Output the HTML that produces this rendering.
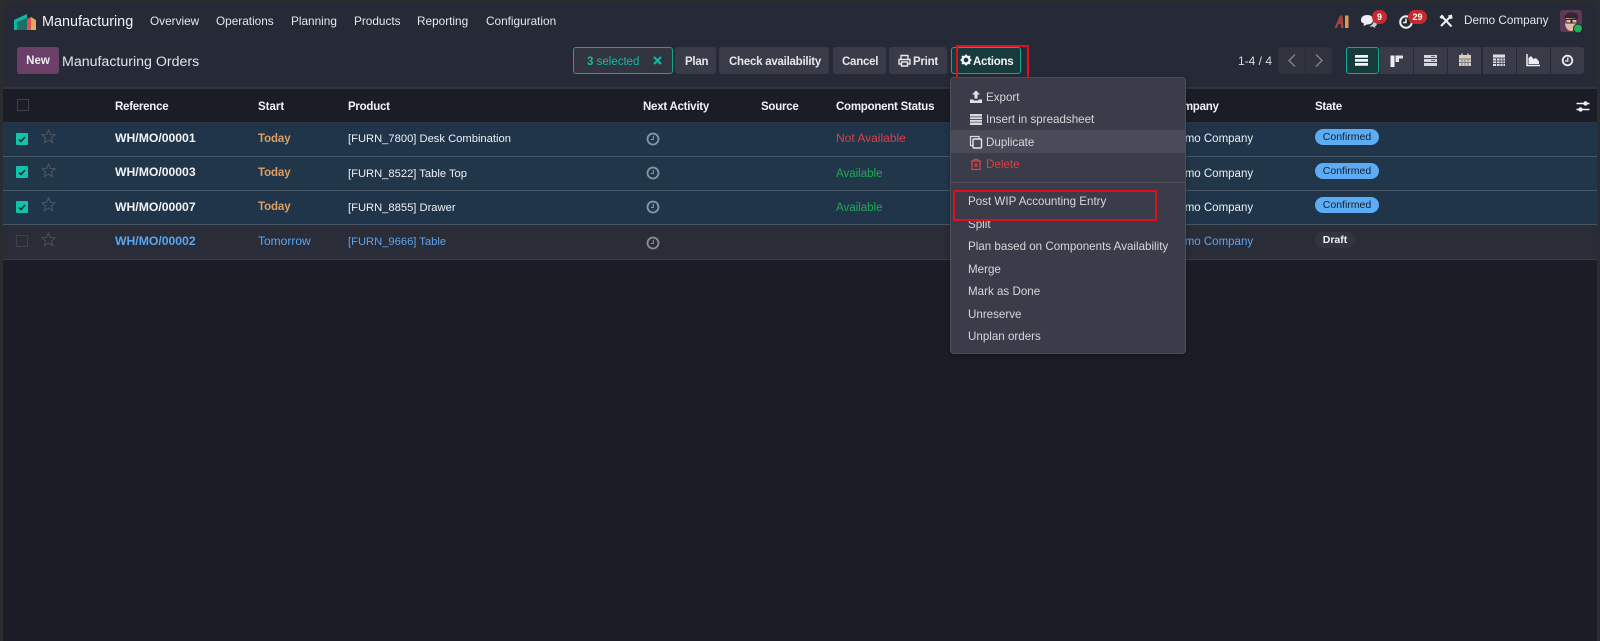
<!DOCTYPE html>
<html lang="en"><head><meta charset="utf-8"><title>Manufacturing Orders</title>
<style>
html,body{margin:0;padding:0;width:1600px;height:641px;overflow:hidden;background:#2b2c30}
body{position:relative;font-family:"Liberation Sans",sans-serif;font-size:12px;color:#e6e6ea}
.b,.t,svg.i{position:absolute}
.t{white-space:nowrap;line-height:16px;height:16px}
.w{font-weight:bold;color:#f2f2f5}
.h{font-size:11.5px;letter-spacing:-.25px}
.btn{position:absolute;background:#3a3b48;border-radius:3px;top:47px;height:27px}
.bt{font-weight:bold;color:#e6e6ea;font-size:11.5px;letter-spacing:-.25px}
.n{font-size:11.8px;top:13px}
.m{color:#d6d6da;font-size:11.6px}
.c{font-size:11.5px;color:#eef0f3}
.p{font-size:11.2px;color:#eef0f3}
.blue{color:#5aa5ef}
.today{color:#dc9e63;font-weight:bold;font-size:11.5px;letter-spacing:-.1px}
.row{position:absolute;left:3px;width:1594px}
.cb{position:absolute;left:16px;width:12px;height:12px;background:#0ec5ac;border-radius:1px}
.pill{position:absolute;left:1315px;height:16px;border-radius:8px;background:#5cabf5;color:#16202c;font-size:10.5px;line-height:16px;text-align:center;width:64px}
.vb{position:absolute;top:47px;height:27px;width:33px;background:#3a3b48}
</style></head><body>
<div class="b" style="left:3px;top:3px;width:1594px;height:638px;background:#1b1d26"></div>
<div class="b" style="left:3px;top:3px;width:1594px;height:84px;background:#262a36"></div>
<div class="b" style="left:3px;top:87px;width:1594px;height:2px;background:#31333d"></div>

<!-- logo -->
<svg class="i" style="left:13px;top:13px" width="24" height="18" viewBox="0 0 24 18">
<polygon points="1,7 14,1 14,17 1,17" fill="#0fb9a2"/>
<polygon points="4,9 14,5 14,17 4,17" fill="#1d6f6a"/>
<polygon points="14,6 18,4 18,17 14,17" fill="#d9574a"/>
<polygon points="18,4 23,7 23,17 18,17" fill="#e6a763"/>
</svg>
<div class="t" style="left:42px;top:14px;font-size:14.4px;color:#f2f2f5">Manufacturing</div>
<div class="t n" style="left:150px">Overview</div>
<div class="t n" style="left:216px">Operations</div>
<div class="t n" style="left:291px">Planning</div>
<div class="t n" style="left:354px">Products</div>
<div class="t n" style="left:417px">Reporting</div>
<div class="t n" style="left:486px">Configuration</div>

<!-- systray -->
<svg class="i" style="left:1334px;top:14px" width="16" height="15" viewBox="0 0 16 15">
<path d="M0.500 14 L6 1.500 L8.500 1.500 L9.500 14 L7 14 L6.700 10 L4.500 10 L3 14Z" fill="#a8413c"/>
<rect x="11" y="1.500" width="3.500" height="12.500" fill="#d99a55"/>
</svg>
<svg class="i" style="left:1360px;top:14px" width="18" height="15" viewBox="0 0 18 15">
<path d="M1 6 C1 2.500 4 1 7.500 1 C11 1 13 3 13 6 C13 9 10.500 10.500 7 10.500 L3.500 12 L4 9.500 C2 9 1 8 1 6Z" fill="#eef0f3"/>
<path d="M14 6 C16 7 17 8 17 9.500 C17 11 16 12 15 12.200 L15.500 14 L12.500 12.600 L9 12.400 C11 11.500 14 10 14 6Z" fill="#c9ccd2"/>
</svg>
<div class="b" style="left:1372px;top:10px;width:15px;height:14px;border-radius:7px;background:#c42a2f;color:#fff;font-size:9px;font-weight:bold;line-height:14px;text-align:center">9</div>
<svg class="i" style="left:1398px;top:14px" width="16" height="16" viewBox="0 0 16 16">
<circle cx="8" cy="8" r="5.800" fill="none" stroke="#eef0f3" stroke-width="2"/>
<path d="M8 4.500V8.500H5" fill="none" stroke="#eef0f3" stroke-width="1.500"/>
</svg>
<div class="b" style="left:1408px;top:10px;width:19px;height:14px;border-radius:7px;background:#c42a2f;color:#fff;font-size:9px;font-weight:bold;line-height:14px;text-align:center">29</div>
<svg class="i" style="left:1439px;top:14px" width="14" height="14" viewBox="0 0 14 14">
<path d="M2.500 2 L12.500 12.500" stroke="#f0f2f5" stroke-width="2"/>
<path d="M11 3 L2 12" stroke="#f0f2f5" stroke-width="2"/>
<path d="M0.500 3 L3 0.500 L5 2.500 L2.500 5Z M9 1.500 L13 0.500 L13.500 4.500 L11 5Z" fill="#f0f2f5"/>
</svg>
<div class="t" style="left:1464px;top:13px;font-size:11.7px">Demo Company</div>
<svg class="i" style="left:1560px;top:10px" width="24" height="24" viewBox="0 0 24 24">
<rect x="0" y="0" width="22" height="22" rx="3" fill="#5f3a58"/>
<path d="M5 14 C5 8 7 6 11 6 C16 6 18 9 17 14 C16 19 13 21 11 21 C8 21 5.500 18 5 14Z" fill="#e5b9a5"/>
<path d="M4 9 C5 3 9 2 13 2.500 C17 3 19 6 18 9 L5 8Z" fill="#33262d"/>
<rect x="6" y="9.500" width="5" height="3.500" fill="none" stroke="#2a2a2e"/><rect x="12" y="9.500" width="5" height="3.500" fill="none" stroke="#2a2a2e"/>
<circle cx="18" cy="18.500" r="5" fill="#1c2030"/><circle cx="18" cy="18.500" r="4" fill="#1fb356"/>
</svg>

<!-- control panel -->
<div class="b" style="left:17px;top:47px;width:42px;height:27px;background:#6b3f68;border-radius:3px;text-align:center;line-height:28px;font-weight:bold;color:#f0f0f2;font-size:11.5px">New</div>
<div class="t" style="left:62px;top:54px;font-size:14.2px;color:#dfe3ea">Manufacturing Orders</div>

<div class="b" style="left:573px;top:47px;width:98px;height:25px;border:1.500px solid #17a394;border-radius:3px;background:#32343f"></div>
<div class="t" style="left:587px;top:54px;color:#12bba4;font-size:11.5px"><b>3</b> selected</div>
<svg class="i" style="left:652px;top:55px" width="11" height="11" viewBox="0 0 11 11"><path d="M2 2L9 9M9 2L2 9" stroke="#12bba4" stroke-width="2"/></svg>
<div class="btn" style="left:675px;width:41px"></div><div class="t bt" style="left:685px;top:54px">Plan</div>
<div class="btn" style="left:719px;width:110px"></div><div class="t bt" style="left:729px;top:54px">Check availability</div>
<div class="btn" style="left:833px;width:53px"></div><div class="t bt" style="left:842px;top:54px">Cancel</div>
<div class="btn" style="left:889px;width:58px"></div>
<svg class="i" style="left:898px;top:54px" width="13" height="13" viewBox="0 0 13 13"><path d="M3 5V1.500H10V5M3 10H1V5.500H12V10H10M3.500 8H9.500V12H3.500Z" fill="none" stroke="#e6e6ea" stroke-width="1.400"/></svg>
<div class="t bt" style="left:913px;top:54px">Print</div>
<div class="b" style="left:951px;top:47px;width:68px;height:25px;background:#173a3c;border:1.500px solid #14a898;border-radius:3px"></div>
<svg class="i" style="left:960px;top:54px" width="12" height="12" viewBox="0 0 12 12"><circle cx="6" cy="6" r="3.500" fill="none" stroke="#f2f2f5" stroke-width="2.400"/><path d="M6 0.500V2.500M6 9.500V11.500M0.500 6H2.500M9.500 6H11.500M2 2L3.400 3.400M8.600 8.600L10 10M2 10L3.400 8.600M8.600 3.400L10 2" stroke="#f2f2f5" stroke-width="1.700"/></svg>
<div class="t bt" style="left:973px;top:54px;color:#f2f2f5">Actions</div>
<div class="b" style="left:956px;top:45px;width:69px;height:30px;border:2px solid #e0101a"></div>

<div class="t" style="left:1238px;top:53px;color:#d9dae0">1-4 / 4</div>
<div class="btn" style="left:1278px;width:54px;background:#30323e"></div>
<div class="b" style="left:1305px;top:47px;width:1px;height:27px;background:#282a35"></div>
<svg class="i" style="left:1286px;top:53px" width="12" height="15" viewBox="0 0 12 15"><path d="M9 1.500L3 7.500L9 13.500" fill="none" stroke="#7d7f88" stroke-width="1.500"/></svg>
<svg class="i" style="left:1313px;top:53px" width="12" height="15" viewBox="0 0 12 15"><path d="M3 1.500L9 7.500L3 13.500" fill="none" stroke="#7d7f88" stroke-width="1.500"/></svg>

<div class="vb" style="left:1380px"></div><div class="vb" style="left:1414px"></div><div class="vb" style="left:1448px"></div><div class="vb" style="left:1483px"></div><div class="vb" style="left:1517px"></div><div class="vb" style="left:1551px;border-radius:0 3px 3px 0"></div>
<div class="b" style="left:1346px;top:46.500px;width:31px;height:25px;background:#173a3c;border:1.500px solid #14a898;border-radius:3px"></div>
<svg class="i" style="left:1355px;top:55px" width="14" height="11" viewBox="0 0 14 11"><path d="M0 0H13V2.800H0ZM0 4H13V6.800H0ZM0 8H13V10.800H0Z" fill="#f4f4f6"/></svg>
<svg class="i" style="left:1390px;top:55px" width="14" height="13" viewBox="0 0 14 13"><path d="M0.500 0.500H4.500V12H0.500Z" fill="#eceef1"/><path d="M5.500 0.500H13V7H5.500Z" fill="#e4e5e9"/><path d="M9 3.500H13V7H9Z" fill="#3a3b48"/></svg>
<svg class="i" style="left:1424px;top:55px" width="14" height="11" viewBox="0 0 14 11"><path d="M0 0H13V3H0ZM0 4H13V7H0ZM0 8H13V11H0Z" fill="#d5d7dc"/><path d="M7 1.500H11M7 5.500H11" stroke="#5a5c66"/></svg>
<svg class="i" style="left:1458px;top:53px" width="14" height="14" viewBox="0 0 14 14"><rect x="1" y="2" width="12" height="11" fill="#d9cdbb"/><path d="M1 6H13M1 9.500H13M4 6V13M7 6V13M10 6V13" stroke="#7a7f88"/><path d="M4 0.500V3M10 0.500V3" stroke="#d9cdbb" stroke-width="1.500"/></svg>
<svg class="i" style="left:1492px;top:53px" width="14" height="14" viewBox="0 0 14 14"><rect x="1" y="1.500" width="12" height="11.500" fill="#dfe0e6"/><path d="M1 5H13M1 8H13M1 10.500H13M4.500 5V13M8 5V13M11 5V13" stroke="#4b4d60"/></svg>
<svg class="i" style="left:1526px;top:53px" width="15" height="14" viewBox="0 0 15 14"><path d="M1 1V12.500H14" fill="none" stroke="#eceef1" stroke-width="1.500"/><path d="M2.500 11V5L5 3L7.500 6L10 5L13 8.500V11Z" fill="#eceef1"/></svg>
<svg class="i" style="left:1561px;top:54px" width="13" height="13" viewBox="0 0 13 13"><circle cx="6.500" cy="6.500" r="4.800" fill="none" stroke="#eceef1" stroke-width="1.800"/><path d="M6.800 3.500V7H4" fill="none" stroke="#eceef1" stroke-width="1.300"/></svg>

<!-- list header -->
<div class="b" style="left:17px;top:99px;width:10px;height:10px;border:1px solid #3e3f49"></div>
<div class="t w h" style="left:115px;top:99px">Reference</div>
<div class="t w" style="left:258px;top:99px;font-size:11.5px">Start</div>
<div class="t w h" style="left:348px;top:99px">Product</div>
<div class="t w h" style="left:643px;top:99px">Next Activity</div>
<div class="t w h" style="left:761px;top:99px">Source</div>
<div class="t w h" style="left:836px;top:99px">Component Status</div>
<div class="t w h" style="left:1168px;top:99px">Company</div>
<div class="t w h" style="left:1315px;top:99px">State</div>
<svg class="i" style="left:1576px;top:100px" width="14" height="13" viewBox="0 0 14 13"><path d="M0.500 3.500H13.500M0.500 9.500H13.500" stroke="#f0f0f3" stroke-width="1.500"/><circle cx="9.500" cy="3.500" r="2.200" fill="#f0f0f3"/><circle cx="4.500" cy="9.500" r="2.200" fill="#f0f0f3"/></svg>

<!-- rows -->
<div class="row" style="top:122px;height:34px;background:#203549;border-top:1px solid #2c3644"></div>
<div class="row" style="top:156px;height:33px;background:#223649;border-top:1px solid #465667"></div>
<div class="row" style="top:190px;height:33px;background:#203549;border-top:1px solid #465667"></div>
<div class="row" style="top:224px;height:34px;background:#2a2c38;border-top:1px solid #465667;border-bottom:1px solid #3c3e4a"></div>

<div class="cb" style="top:133px"></div><div class="cb" style="top:166px"></div><div class="cb" style="top:201px"></div>
<svg class="i" style="left:17px;top:134px" width="10" height="10" viewBox="0 0 10 10"><path d="M2 5.500L4 7.500L8 3" fill="none" stroke="#12202a" stroke-width="1.500"/></svg>
<svg class="i" style="left:17px;top:167px" width="10" height="10" viewBox="0 0 10 10"><path d="M2 5.500L4 7.500L8 3" fill="none" stroke="#12202a" stroke-width="1.500"/></svg>
<svg class="i" style="left:17px;top:202px" width="10" height="10" viewBox="0 0 10 10"><path d="M2 5.500L4 7.500L8 3" fill="none" stroke="#12202a" stroke-width="1.500"/></svg>
<div class="b" style="left:16px;top:235px;width:10px;height:10px;border:1px solid #3e404b"></div>

<svg class="i" style="left:41px;top:129px" width="15" height="15" viewBox="0 0 15 15"><path d="M7.500 1L9.400 5.400L14 5.800L10.500 8.900L11.600 13.600L7.500 11.100L3.400 13.600L4.500 8.900L1 5.800L5.600 5.400Z" fill="none" stroke="#4f5560" stroke-width="1.100"/></svg>
<svg class="i" style="left:41px;top:163px" width="15" height="15" viewBox="0 0 15 15"><path d="M7.500 1L9.400 5.400L14 5.800L10.500 8.900L11.600 13.600L7.500 11.100L3.400 13.600L4.500 8.900L1 5.800L5.600 5.400Z" fill="none" stroke="#4f5560" stroke-width="1.100"/></svg>
<svg class="i" style="left:41px;top:197px" width="15" height="15" viewBox="0 0 15 15"><path d="M7.500 1L9.400 5.400L14 5.800L10.500 8.900L11.600 13.600L7.500 11.100L3.400 13.600L4.500 8.900L1 5.800L5.600 5.400Z" fill="none" stroke="#4f5560" stroke-width="1.100"/></svg>
<svg class="i" style="left:41px;top:232px" width="15" height="15" viewBox="0 0 15 15"><path d="M7.500 1L9.400 5.400L14 5.800L10.500 8.900L11.600 13.600L7.500 11.100L3.400 13.600L4.500 8.900L1 5.800L5.600 5.400Z" fill="none" stroke="#4a4c56" stroke-width="1.100"/></svg>

<div class="t w" style="left:115px;top:130px;font-size:12.2px">WH/MO/00001</div>
<div class="t w" style="left:115px;top:164px;font-size:12.2px">WH/MO/00003</div>
<div class="t w" style="left:115px;top:199px;font-size:12.2px">WH/MO/00007</div>
<div class="t blue" style="left:115px;top:233px;font-weight:bold;font-size:12.2px">WH/MO/00002</div>

<div class="t today" style="left:258px;top:131px">Today</div>
<div class="t today" style="left:258px;top:165px">Today</div>
<div class="t today" style="left:258px;top:199px">Today</div>
<div class="t blue" style="left:258px;top:233px">Tomorrow</div>

<div class="t p" style="left:348px;top:131px">[FURN_7800] Desk Combination</div>
<div class="t p" style="left:348px;top:166px">[FURN_8522] Table Top</div>
<div class="t p" style="left:348px;top:200px">[FURN_8855] Drawer</div>
<div class="t p" style="left:348px;top:234px;color:#5aa5ef">[FURN_9666] Table</div>

<svg class="i" style="left:646px;top:132px" width="14" height="14" viewBox="0 0 14 14"><circle cx="7" cy="7" r="5.500" fill="none" stroke="#8b97a5" stroke-width="1.800"/><path d="M7.300 3.800V7.500H4.800" fill="none" stroke="#8b97a5" stroke-width="1.100"/></svg>
<svg class="i" style="left:646px;top:166px" width="14" height="14" viewBox="0 0 14 14"><circle cx="7" cy="7" r="5.500" fill="none" stroke="#8b97a5" stroke-width="1.800"/><path d="M7.300 3.800V7.500H4.800" fill="none" stroke="#8b97a5" stroke-width="1.100"/></svg>
<svg class="i" style="left:646px;top:200px" width="14" height="14" viewBox="0 0 14 14"><circle cx="7" cy="7" r="5.500" fill="none" stroke="#8b97a5" stroke-width="1.800"/><path d="M7.300 3.800V7.500H4.800" fill="none" stroke="#8b97a5" stroke-width="1.100"/></svg>
<svg class="i" style="left:646px;top:236px" width="14" height="14" viewBox="0 0 14 14"><circle cx="7" cy="7" r="5.500" fill="none" stroke="#8b8d98" stroke-width="1.800"/><path d="M7.300 3.800V7.500H4.800" fill="none" stroke="#8b8d98" stroke-width="1.100"/></svg>

<div class="t" style="left:836px;top:130px;color:#dc3e4c">Not Available</div>
<div class="t" style="left:836px;top:166px;color:#1fa855;font-size:11.5px">Available</div>
<div class="t" style="left:836px;top:200px;color:#1fa855;font-size:11.5px">Available</div>

<div class="t c" style="left:1170px;top:131px">Demo Company</div>
<div class="t c" style="left:1170px;top:166px">Demo Company</div>
<div class="t c" style="left:1170px;top:200px">Demo Company</div>
<div class="t c" style="left:1170px;top:234px;color:#5aa5ef">Demo Company</div>

<div class="pill" style="top:129px">Confirmed</div>
<div class="pill" style="top:163px">Confirmed</div>
<div class="pill" style="top:197px">Confirmed</div>
<div class="pill" style="top:232px;width:40px;background:#33343f;color:#eef0f3;font-weight:bold">Draft</div>

<!-- dropdown -->
<div class="b" style="left:950px;top:77px;width:234px;height:275px;background:#3b3c49;border:1px solid #4c4d59;border-radius:4px;box-shadow:0 2px 6px rgba(0,0,0,.3)"></div>
<div class="b" style="left:951px;top:130px;width:234px;height:23px;background:#4a4b58"></div>
<div class="b" style="left:951px;top:182px;width:234px;height:1px;background:#545561"></div>

<svg class="i" style="left:969px;top:90px" width="14" height="14" viewBox="0 0 14 14"><path d="M7 0.500L11 4.500H8.500V8.500H5.500V4.500H3Z" fill="#e4e4e8"/><path d="M1 9.500H4.500V10.500H9.500V9.500H13V13H1Z" fill="#e4e4e8"/></svg>
<svg class="i" style="left:969px;top:113px" width="14" height="13" viewBox="0 0 14 13"><path d="M1 1H13V12H1Z" fill="#dadade"/><path d="M1 3.800H13M1 6.500H13M1 9.200H13" stroke="#5a5b66" stroke-width=".9"/></svg>
<svg class="i" style="left:969px;top:135px" width="14" height="14" viewBox="0 0 14 14"><path d="M3.500 10.500H1.500V1.500H10V3.500" fill="none" stroke="#dadade" stroke-width="1.200"/><rect x="4" y="4" width="8.500" height="9" rx="1" fill="none" stroke="#e4e4e8" stroke-width="1.400"/></svg>
<svg class="i" style="left:970px;top:158px" width="12" height="13" viewBox="0 0 12 13"><path d="M1 3H11M4 3V1.500H8V3M2 3.500V11.500H10V3.500" fill="none" stroke="#d8404e" stroke-width="1.300"/><path d="M4.500 5.500L7.500 9M7.500 5.500L4.500 9" stroke="#d8404e"/></svg>

<div class="t m" style="left:986px;top:90px">Export</div>
<div class="t m" style="left:986px;top:112px">Insert in spreadsheet</div>
<div class="t m" style="left:986px;top:135px">Duplicate</div>
<div class="t" style="left:986px;top:157px;color:#dc3e4c;font-size:11.6px">Delete</div>
<div class="t m" style="left:968px;top:194px">Post WIP Accounting Entry</div>
<div class="t m" style="left:968px;top:217px">Split</div>
<div class="t m" style="left:968px;top:239px">Plan based on Components Availability</div>
<div class="t m" style="left:968px;top:262px">Merge</div>
<div class="t m" style="left:968px;top:284px">Mark as Done</div>
<div class="t m" style="left:968px;top:307px">Unreserve</div>
<div class="t m" style="left:968px;top:329px">Unplan orders</div>
<div class="b" style="left:953px;top:190px;width:200px;height:27px;border:2px solid #e0101a"></div>
</body></html>
